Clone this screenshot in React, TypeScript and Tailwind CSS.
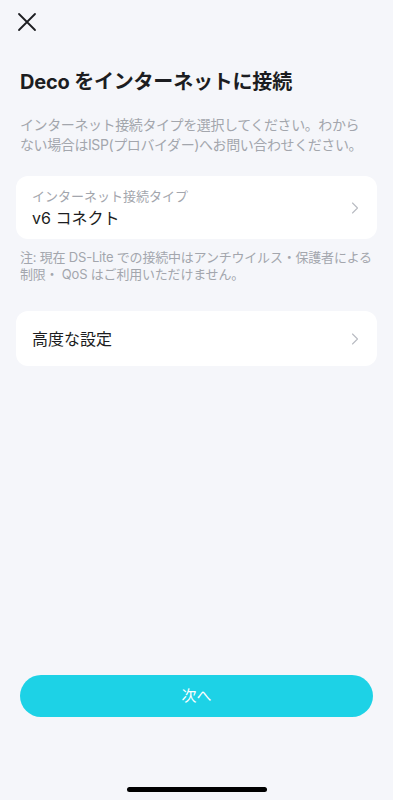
import { ChevronRight } from "lucide-react";

export default function App() {
  return (
    <div
      className="relative flex h-[800px] w-full flex-col overflow-hidden bg-[#f5f6fa] text-[#1c1d21]"
      style={{ fontFamily: '"Inter", "Noto Sans CJK JP", sans-serif' }}
    >
      {/* Close */}
      <div className="px-[16px] pt-[11px]">
        <svg width="22" height="22" viewBox="0 0 22 22" fill="none">
          <path d="M3 3 L19 19 M19 3 L3 19" stroke="#1c1d21" strokeWidth="1.8" strokeLinecap="round" />
        </svg>
      </div>

      {/* Heading */}
      <h1 className="mt-[35px] px-[20px] text-[20px] font-bold leading-[28px] tracking-[-0.2px]">
        Deco をインターネットに接続
      </h1>
      <p className="mt-[19px] whitespace-nowrap px-[20px] text-[14px] leading-[20px] tracking-[-0.4px] text-[#a3a6ad]">
        インターネット接続タイプを選択してください。わから
        <br />
        ない場合はISP(プロバイダー)へお問い合わせください。
      </p>

      {/* Connection type */}
      <div className="mx-[16px] mt-[21px] flex h-[63px] items-center justify-between rounded-[12px] bg-white pl-[16px] pr-[12px]">
        <div className="flex flex-col">
          <span className="text-[13px] leading-[18px] text-[#a3a6ad]">インターネット接続タイプ</span>
          <span className="mt-[2px] text-[16px] leading-[22px]">v6 コネクト</span>
        </div>
        <ChevronRight className="h-[20px] w-[20px] text-[#b8bbc2]" strokeWidth={1.3} />
      </div>
      <p className="mt-[10px] whitespace-nowrap px-[20px] text-[13px] leading-[17px] tracking-[-0.2px] text-[#a3a6ad]">
        注: 現在 DS-Lite での接続中はアンチウイルス・保護者による
        <br />
        制限・ QoS はご利用いただけません。
      </p>

      {/* Advanced */}
      <div className="mx-[16px] mt-[28px] flex h-[55px] items-center justify-between rounded-[12px] bg-white pl-[16px] pr-[12px]">
        <span className="text-[16px] leading-[22px]">高度な設定</span>
        <ChevronRight className="h-[20px] w-[20px] text-[#b8bbc2]" strokeWidth={1.3} />
      </div>

      <div className="flex-1" />

      {/* Next */}
      <div className="px-[20px] pb-[83px]">
        <button className="flex h-[42px] w-full items-center justify-center rounded-full bg-[#1dd2e6] text-[15px] text-white">
          次へ
        </button>
      </div>

      {/* Home indicator */}
      <div className="absolute bottom-[8px] left-1/2 h-[5px] w-[140px] -translate-x-1/2 rounded-full bg-black" />
    </div>
  );
}
